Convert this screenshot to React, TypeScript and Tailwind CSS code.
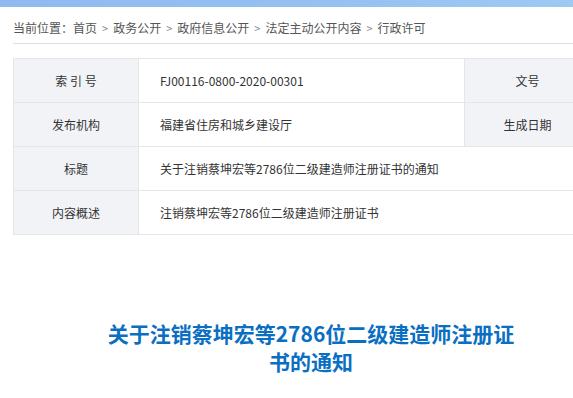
import React from "react";

const font = { fontFamily: '"Noto Sans CJK SC", "Noto Sans", sans-serif' };

const crumbs = ["首页", "政务公开", "政府信息公开", "法定主动公开内容", "行政许可"];

export default function App() {
  return (
    <div className="w-[573px] h-[398px] overflow-hidden bg-white text-[#333]" style={font}>
      <div className="h-[7px] w-full bg-gradient-to-r from-[#8fbaf0] via-[#93c0f1] to-[#9ec9f3]" />
      <div className="w-[1000px] pl-[13px]">
        <div className="h-[37px] flex items-end border-b border-[#dedede] text-[12px] leading-[20px] text-[#555]">
          <span className="mb-[5px]">
            当前位置：
            {crumbs.map((c, i) => (
              <React.Fragment key={c}>
                {i > 0 && <span className="mx-[5px] text-[11px] text-[#888]">&gt;</span>}
                <span>{c}</span>
              </React.Fragment>
            ))}
          </span>
        </div>
        <table className="mt-[14px] table-fixed w-[997px] border-collapse text-[12px] leading-[16px]">
          <colgroup>
            <col className="w-[125px]" />
            <col className="w-[326px]" />
            <col className="w-[126px]" />
            <col className="w-[420px]" />
          </colgroup>
          <tbody>
            <tr className="h-[44px]">
              <td className="border border-[#e6e6e6] bg-[#f2f3f7] text-center">索 引 号</td>
              <td className="border border-[#e6e6e6] pl-[21px]">FJ00116-0800-2020-00301</td>
              <td className="border border-[#e6e6e6] bg-[#f2f3f7] text-center">文号</td>
              <td className="border border-[#e6e6e6] pl-[21px]"></td>
            </tr>
            <tr className="h-[44px]">
              <td className="border border-[#e6e6e6] bg-[#f2f3f7] text-center">发布机构</td>
              <td className="border border-[#e6e6e6] pl-[21px]">福建省住房和城乡建设厅</td>
              <td className="border border-[#e6e6e6] bg-[#f2f3f7] text-center">生成日期</td>
              <td className="border border-[#e6e6e6] pl-[21px]"></td>
            </tr>
            <tr className="h-[44px]">
              <td className="border border-[#e6e6e6] bg-[#f2f3f7] text-center">标题</td>
              <td colSpan={3} className="border border-[#e6e6e6] pl-[21px]">
                关于注销蔡坤宏等2786位二级建造师注册证书的通知
              </td>
            </tr>
            <tr className="h-[44px]">
              <td className="border border-[#e6e6e6] bg-[#f2f3f7] text-center">内容概述</td>
              <td colSpan={3} className="border border-[#e6e6e6] pl-[21px]">
                注销蔡坤宏等2786位二级建造师注册证书
              </td>
            </tr>
          </tbody>
        </table>
        <div className="w-[596px] pt-[84px]">
          <h1 className="mx-auto w-[416px] text-center text-[21px] leading-[28px] font-bold text-[#0a6fc2]">
            关于注销蔡坤宏等2786位二级建造师注册证书的通知
          </h1>
        </div>
      </div>
    </div>
  );
}
